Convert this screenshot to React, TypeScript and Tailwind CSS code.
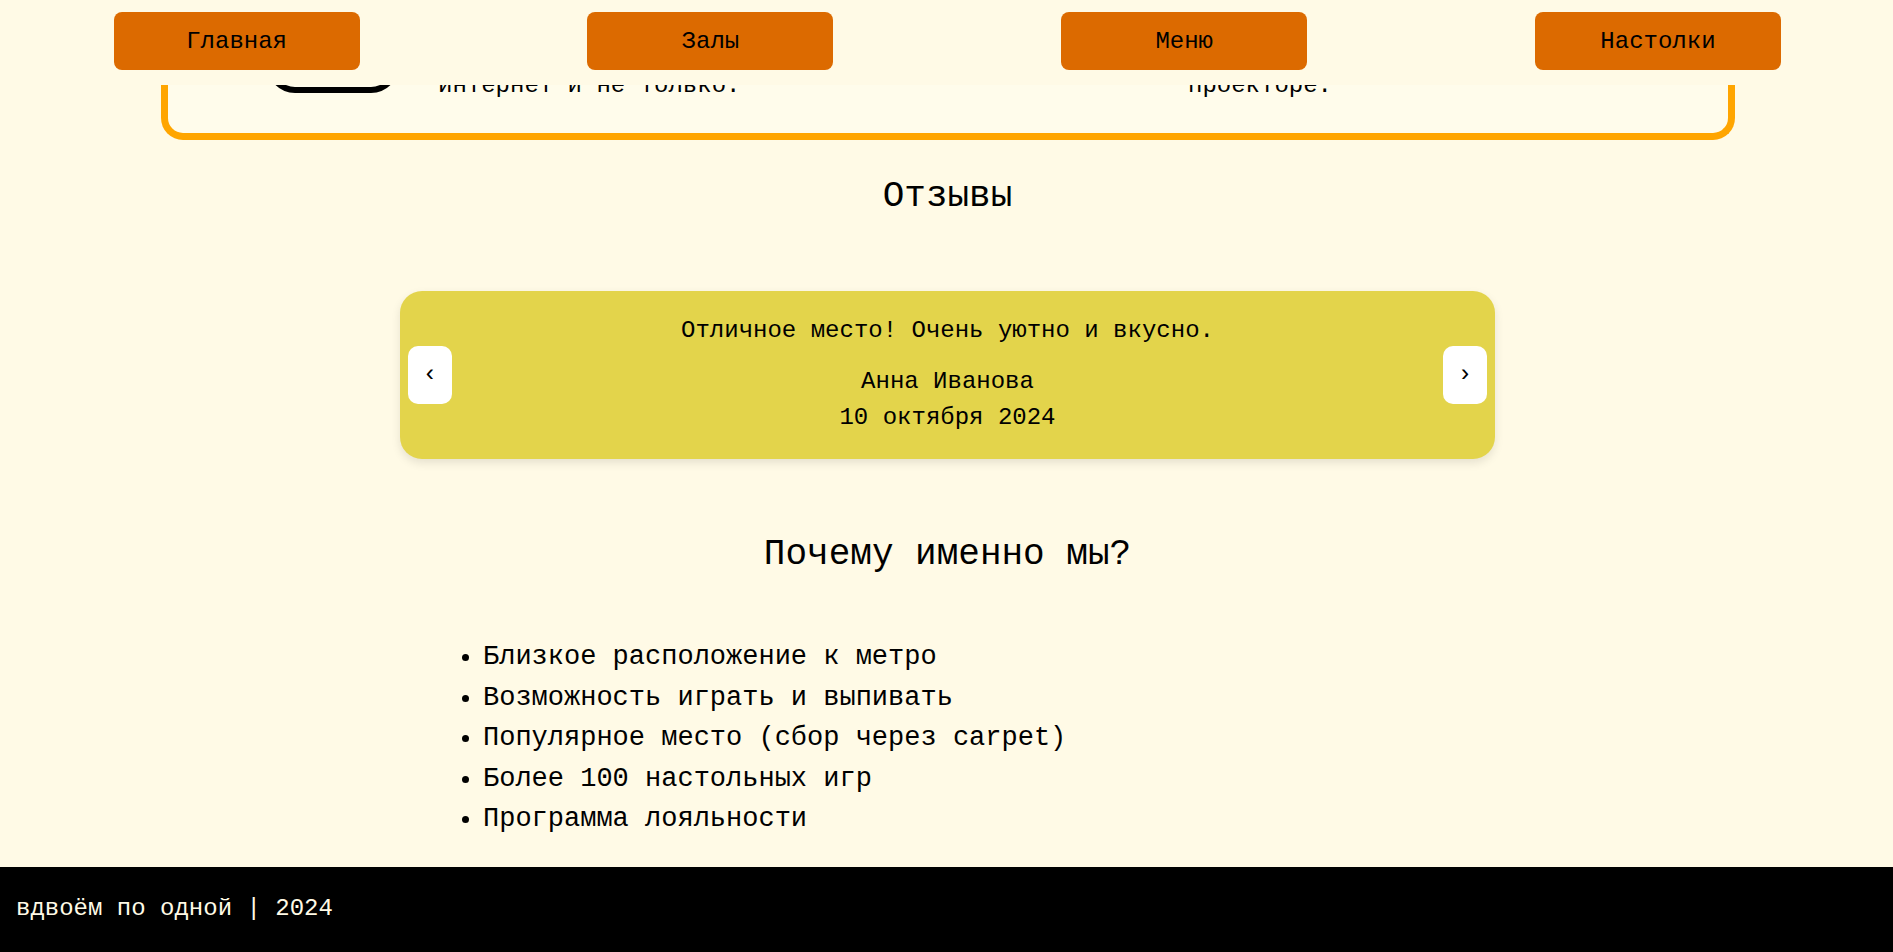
import { useState } from "react";

const links = [
  { label: "Главная", href: "#main" },
  { label: "Залы", href: "#halls" },
  { label: "Меню", href: "#menu" },
  { label: "Настолки", href: "#games" },
];

const reviews = [
  { text: "Отличное место! Очень уютно и вкусно.", author: "Анна Иванова", date: "10 октября 2024" },
];

const reasons = [
  "Близкое расположение к метро",
  "Возможность играть и выпивать",
  "Популярное место (сбор через carpet)",
  "Более 100 настольных игр",
  "Программа лояльности",
];

const arrow =
  "flex h-[58px] w-11 shrink-0 cursor-pointer items-center justify-center rounded-[10px] bg-white text-2xl";

function Header() {
  return (
    <header className="fixed inset-x-0 top-0 z-10 bg-[#fffae6]">
      <nav className="flex justify-between pt-3 pr-28 pb-[15px] pl-[6%]">
        {links.map((link) => (
          <a
            key={link.href}
            href={link.href}
            className="w-[13vw] rounded-lg bg-[#dc6a00] pt-3 pb-2.5 text-center text-2xl leading-9"
          >
            {link.label}
          </a>
        ))}
      </nav>
    </header>
  );
}

function Services() {
  return (
    <section className="pr-[158px] pl-[159px]">
      <div className="flex rounded-b-[22px] border-x-[7px] border-b-[7px] border-[#ffa500] bg-[#fffceb] pt-[68px] pb-[29px] text-2xl leading-9">
        <div className="flex w-[1020px] items-start">
          <svg aria-hidden="true" viewBox="0 0 132 26" className="ml-[99px] h-[26px] w-[132px]" fill="none" stroke="#000" strokeWidth="6">
            <path d="M3 -3A25 25 0 0 0 28 22H104A25 25 0 0 0 129 -3" />
          </svg>
          <p className="ml-[39px]">интернет и не только.</p>
        </div>
        <p>проекторе.</p>
      </div>
    </section>
  );
}

function Reviews() {
  const [current, setCurrent] = useState(0);
  const move = (step: number) => setCurrent((current + step + reviews.length) % reviews.length);
  const review = reviews[current];
  return (
    <section className="pt-[30px]">
      <h2 className="text-center text-4xl leading-[54px]">Отзывы</h2>
      <div className="mx-auto mt-[67px] flex w-[57.9%] items-center justify-between rounded-[22px] bg-[#e3d44b] px-2 pt-[22px] pb-[23px] shadow-[0_4px_10px_rgba(0,0,0,0.1)]">
        <button type="button" aria-label="Предыдущий отзыв" className={arrow} onClick={() => move(-1)}>
          ‹
        </button>
        <div className="text-center text-2xl leading-9">
          <p className="mb-[15px]">{review.text}</p>
          <p>{review.author}</p>
          <p>{review.date}</p>
        </div>
        <button type="button" aria-label="Следующий отзыв" className={arrow} onClick={() => move(1)}>
          ›
        </button>
      </div>
    </section>
  );
}

function Reasons() {
  return (
    <section className="pt-[69px] pb-[27px]">
      <h2 className="text-center text-4xl leading-[54px]">Почему именно мы?</h2>
      <ul className="mt-[55px] ml-[481px] list-disc text-[27px] leading-normal">
        {reasons.map((reason) => (
          <li key={reason}>{reason}</li>
        ))}
      </ul>
    </section>
  );
}

export default function App() {
  return (
    <div className="flex min-h-screen flex-col bg-[#fffae6] font-['Liberation_Mono',monospace] text-black">
      <Header />
      <main className="pl-0.5">
        <Services />
        <Reviews />
        <Reasons />
      </main>
      <footer className="grow bg-black px-4 pt-6 pb-[25px] text-2xl leading-9 text-[#fffae6]">
        <p>вдвоём по одной | 2024</p>
      </footer>
    </div>
  );
}
